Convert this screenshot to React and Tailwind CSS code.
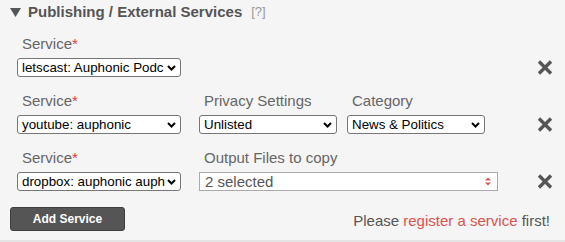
import React from "react";

const Chevron = () => (
  <svg width="9" height="6" viewBox="0 0 9 6" className="shrink-0 ml-[2px]">
    <polyline points="1,1 4.5,4.5 8,1" fill="none" stroke="#000" strokeWidth="2" />
  </svg>
);

const Select = ({ value, w }) => (
  <div
    className={`mt-[4px] h-[19px] flex items-center bg-white border border-[#767676] rounded-[3px] pl-[4px] pr-[4px] text-[13.33px] text-black leading-none ${w}`}
  >
    <span className="flex-1 min-w-0 whitespace-nowrap">{value}</span>
    <Chevron />
  </div>
);

const Label = ({ children, req }) => (
  <div className="pl-[5px] h-[20px] leading-[20px] text-[15px] text-[#666] whitespace-nowrap">
    {children}
    {req && <span className="text-[#e53935]">*</span>}
  </div>
);

const CloseX = () => (
  <div className="ml-auto h-[19px] flex items-center mt-[4px]">
    <svg width="16" height="15" viewBox="0 0 16 15">
      <path d="M2 1.5 L14 13.5 M14 1.5 L2 13.5" stroke="#555" strokeWidth="3.4" fill="none" />
    </svg>
  </div>
);

export default function App() {
  return (
    <div className="w-[565px] h-[242px] bg-[#f5f5f5] border-b-2 border-[#e4e4e4] font-['Liberation_Sans',Arial,sans-serif] box-border">
      <div className="flex items-center pl-[10px] pt-[2px] h-[22px]">
        <svg width="11" height="9" viewBox="0 0 11 9" className="mr-[7px]">
          <polygon points="0,0 11,0 5.5,9" fill="#555" />
        </svg>
        <span className="text-[15px] font-bold text-[#555] leading-[20px]">
          Publishing / External Services
        </span>
        <span className="ml-[9px] text-[13px] text-[#999] leading-[20px]">[?]</span>
      </div>

      <div className="mt-[12px] pl-[17px] pr-[12px] flex flex-col gap-[14px]">
        <div className="flex items-end">
          <div className="w-[164px]">
            <Label req>Service</Label>
            <Select value="letscast: Auphonic Podc" w="w-[164px]" />
          </div>
          <CloseX />
        </div>

        <div className="flex items-end">
          <div className="w-[164px]">
            <Label req>Service</Label>
            <Select value="youtube: auphonic" w="w-[164px]" />
          </div>
          <div className="w-[138px] ml-[18px]">
            <Label>Privacy Settings</Label>
            <Select value="Unlisted" w="w-[138px]" />
          </div>
          <div className="w-[138px] ml-[10px]">
            <Label>Category</Label>
            <Select value="News & Politics" w="w-[138px]" />
          </div>
          <CloseX />
        </div>

        <div className="flex items-end">
          <div className="w-[164px]">
            <Label req>Service</Label>
            <Select value="dropbox: auphonic auph" w="w-[164px]" />
          </div>
          <div className="w-[299px] ml-[18px]">
            <Label>Output Files to copy</Label>
            <div className="mt-[4px] h-[19px] flex items-center justify-between bg-white border border-[#aaa] pl-[5px] pr-[6px] text-[15px] text-[#555] leading-none">
              <span>2 selected</span>
              <svg width="6" height="9" viewBox="0 0 6 9">
                <polygon points="0,3.5 6,3.5 3,0.5" fill="#d0574f" />
                <polygon points="0,5.5 6,5.5 3,8.5" fill="#d0574f" />
              </svg>
            </div>
          </div>
          <CloseX />
        </div>
      </div>

      <div className="mt-[16px] flex items-end justify-between pl-[10px] pr-[15px]">
        <button className="w-[115px] h-[24px] bg-[#555] border border-[#3e3e3e] rounded-[3px] text-white font-bold text-[12px] leading-none">
          Add Service
        </button>
        <div className="text-[15px] leading-[20px] text-[#555]">
          Please <span className="text-[#d9534f]">register a service</span> first!
        </div>
      </div>
    </div>
  );
}
